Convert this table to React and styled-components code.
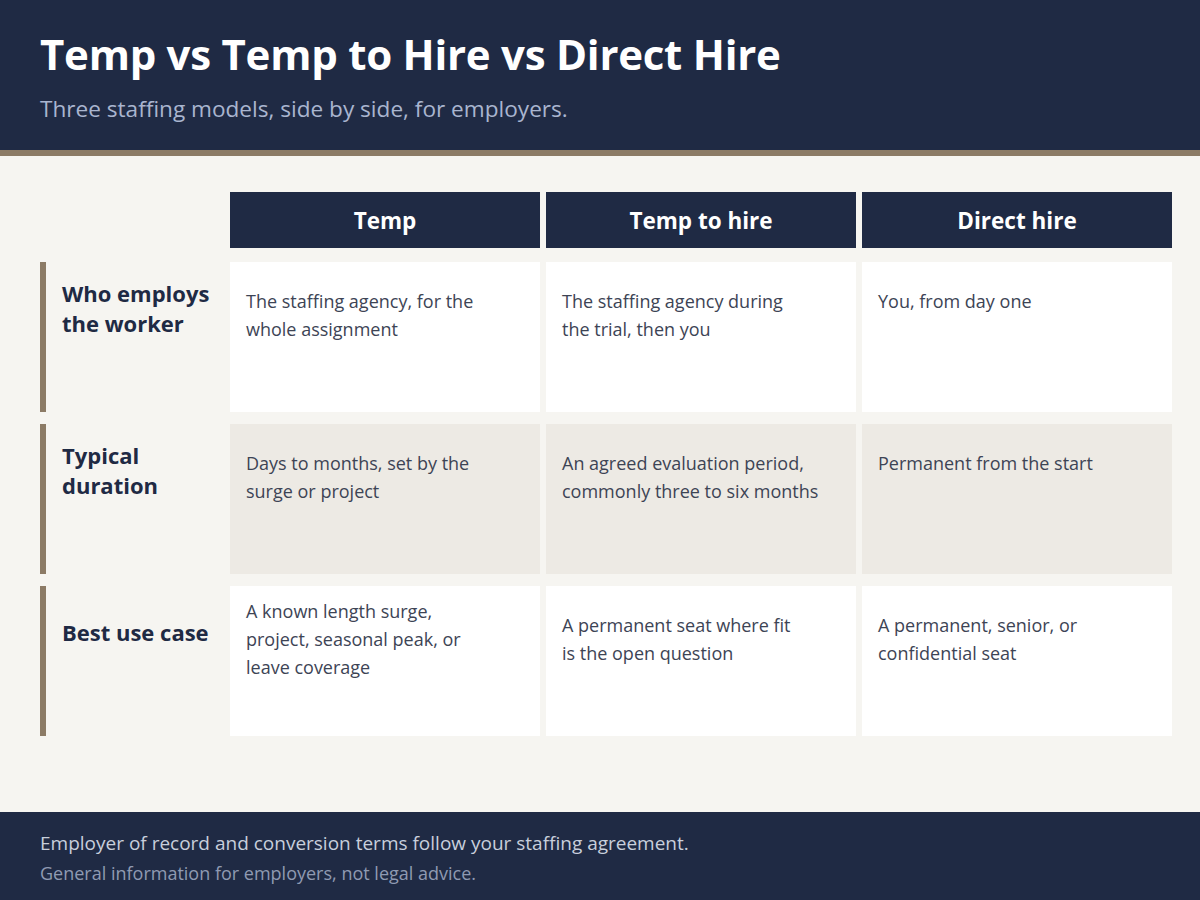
import React from 'react';
import styled, { createGlobalStyle } from 'styled-components';

const GlobalStyle = createGlobalStyle`
  html, body {
    margin: 0;
    padding: 0;
    background: #f6f5f1;
  }
  body {
    font-family: 'Open Sans', 'Noto Sans', sans-serif;
  }
`;

const Page = styled.div`
  width: 1200px;
  height: 900px;
  display: flex;
  flex-direction: column;
  background: #f6f5f1;
`;

const Header = styled.header`
  background: #1f2a44;
  border-bottom: 6px solid #8c7b66;
  padding: 24px 40px 0;
  height: 156px;
  box-sizing: border-box;
`;

const Title = styled.h1`
  margin: 0;
  color: #ffffff;
  font-size: 42px;
  font-weight: 700;
  line-height: 60px;
  letter-spacing: -0.25px;
`;

const Subtitle = styled.p`
  margin: 10px 0 0;
  color: #a9b5cf;
  font-size: 22.6px;
  line-height: 30px;
`;

const Main = styled.main`
  flex: 1;
  padding: 36px 28px 0 40px;
`;

const Grid = styled.div`
  display: grid;
  grid-template-columns: 184px repeat(3, 310px);
  column-gap: 6px;
  row-gap: 12px;
`;

const Corner = styled.div``;

const ColHead = styled.div`
  height: 56px;
  margin-bottom: 2px;
  background: #1f2a44;
  color: #ffffff;
  font-size: 22.5px;
  font-weight: 700;
  display: flex;
  align-items: center;
  justify-content: center;
`;

const RowLabel = styled.div`
  height: 150px;
  box-sizing: border-box;
  border-left: 6px solid #8c7b66;
  padding: 16px 0 0 16px;
`;

const LabelText = styled.div`
  min-height: 60px;
  display: flex;
  align-items: center;
  color: #1f2a44;
  font-size: 22px;
  font-weight: 700;
  line-height: 30px;
`;

const Cell = styled.div`
  height: 150px;
  box-sizing: border-box;
  background: ${({ $shaded }) => ($shaded ? '#edeae4' : '#ffffff')};
  padding: ${({ $tall }) => ($tall ? '11px' : '25px')} 16px 0;
  color: #3d4455;
  font-size: 18px;
  line-height: 28px;
`;

const Line = styled.span`
  display: block;
  white-space: nowrap;
`;

const Footer = styled.footer`
  height: 88px;
  box-sizing: border-box;
  background: #1f2a44;
  padding: 16px 40px 0;
`;

const Note = styled.p`
  margin: 0;
  color: ${({ $muted }) => ($muted ? '#8f9ab2' : '#c8cfdc')};
  font-size: ${({ $muted }) => ($muted ? '18px' : '19px')};
  line-height: 30px;
`;

const columns = ['Temp', 'Temp to hire', 'Direct hire'];

const rows = [
  {
    label: 'Who employs the worker',
    cells: [
      ['The staffing agency, for the', 'whole assignment'],
      ['The staffing agency during', 'the trial, then you'],
      ['You, from day one'],
    ],
  },
  {
    label: 'Typical duration',
    shaded: true,
    cells: [
      ['Days to months, set by the', 'surge or project'],
      ['An agreed evaluation period,', 'commonly three to six months'],
      ['Permanent from the start'],
    ],
  },
  {
    label: 'Best use case',
    cells: [
      ['A known length surge,', 'project, seasonal peak, or', 'leave coverage'],
      ['A permanent seat where fit', 'is the open question'],
      ['A permanent, senior, or', 'confidential seat'],
    ],
  },
];

const App = () => {
  return (
    <Page>
      <GlobalStyle />
      <Header>
        <Title>Temp vs Temp to Hire vs Direct Hire</Title>
        <Subtitle>Three staffing models, side by side, for employers.</Subtitle>
      </Header>
      <Main>
        <Grid>
          <Corner />
          {columns.map((c) => (
            <ColHead key={c}>{c}</ColHead>
          ))}
          {rows.map((row) => (
            <React.Fragment key={row.label}>
              <RowLabel>
                <LabelText>{row.label}</LabelText>
              </RowLabel>
              {row.cells.map((lines, i) => (
                <Cell key={i} $shaded={row.shaded} $tall={lines.length > 2}>
                  {lines.map((l) => (
                    <Line key={l}>{l}</Line>
                  ))}
                </Cell>
              ))}
            </React.Fragment>
          ))}
        </Grid>
      </Main>
      <Footer>
        <Note>Employer of record and conversion terms follow your staffing agreement.</Note>
        <Note $muted>General information for employers, not legal advice.</Note>
      </Footer>
    </Page>
  );
};

export default App;
